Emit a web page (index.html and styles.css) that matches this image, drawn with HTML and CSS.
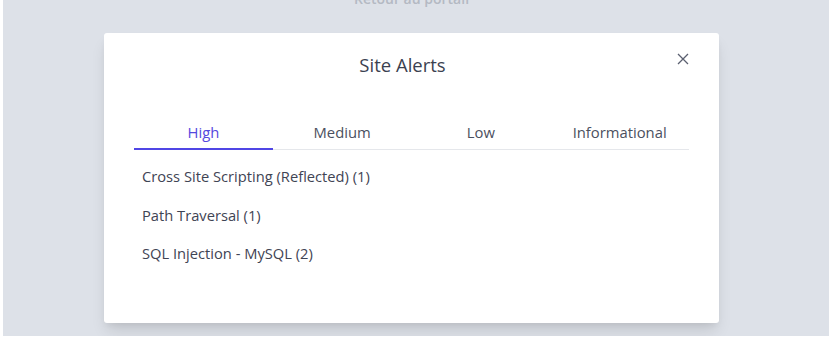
FILE: index.html
```html
<!DOCTYPE html>
<html lang="en">
<head>
  <meta charset="UTF-8" />
  <meta name="viewport" content="width=device-width, initial-scale=1.0" />
  <title>Site Alerts</title>
  <link rel="stylesheet" href="styles.css">
</head>
<body>
  <div class="page">
    <a class="back-link" href="#">Retour au portail</a>

    <div class="modal">
      <div class="modal-header">
        <h2 class="modal-title">Site Alerts</h2>
        <button class="close-btn" type="button" aria-label="Close">
          <svg width="12" height="12" viewBox="0 0 12 12">
            <path d="M1 1 L11 11 M11 1 L1 11" stroke="#5b6070" stroke-width="1.3" fill="none" />
          </svg>
        </button>
      </div>

      <nav class="tabs">
        <a class="tab active" href="#">High</a>
        <a class="tab" href="#">Medium</a>
        <a class="tab" href="#">Low</a>
        <a class="tab" href="#">Informational</a>
      </nav>

      <ul class="alert-list">
        <li>Cross Site Scripting (Reflected) (1)</li>
        <li>Path Traversal (1)</li>
        <li>SQL Injection - MySQL (2)</li>
      </ul>
    </div>
  </div>
</body>
</html>
```

FILE: styles.css
```css
body {
  font-family: 'Open Sans', 'Noto Sans', sans-serif;
  margin: 0;
  background-color: #fff;
  color: #3f4454;
}

.page {
  margin-left: 3px;
  width: 826px;
  height: 336px;
  background-color: #dde1e8;
  padding: 0 110px 0 101px;
  box-sizing: border-box;
  overflow: hidden;
}

.back-link {
  display: block;
  margin-top: -11px;
  line-height: 20px;
  font-size: 14px;
  font-weight: 600;
  text-align: center;
  color: #b4b9c3;
  text-decoration: none;
}

.modal {
  margin-top: 24px;
  background: #fff;
  border-radius: 3px;
  padding: 18px 30px 50px;
  box-shadow: 0 10px 15px -3px rgba(0,0,0,0.12), 0 4px 6px -2px rgba(0,0,0,0.06);
}

.modal-header {
  display: flex;
  align-items: flex-start;
}

.modal-title {
  flex: 1;
  margin: 0;
  text-align: center;
  font-size: 18.5px;
  font-weight: 400;
  line-height: 28px;
  color: #3b4150;
}

.close-btn {
  width: 18px;
  padding: 0;
  margin-top: 2px;
  border: none;
  background: none;
  display: flex;
  justify-content: flex-end;
  cursor: pointer;
}

.tabs {
  display: flex;
  margin-top: 43px;
  border-bottom: 1px solid #e5e7eb;
}

.tab {
  flex: 1;
  text-align: center;
  font-size: 14.8px;
  line-height: 20px;
  padding-bottom: 6px;
  margin-bottom: -1px;
  border-bottom: 2px solid transparent;
  color: #4b5060;
  text-decoration: none;
}

.tab.active {
  color: #5548de;
  border-bottom-color: #5046e5;
}

.alert-list {
  list-style: none;
  margin: 0;
  padding: 7px 0 0;
}

.alert-list li {
  padding: 8px 0 8px 8px;
  font-size: 14.7px;
  line-height: 22.5px;
  color: #3f4454;
}
```
